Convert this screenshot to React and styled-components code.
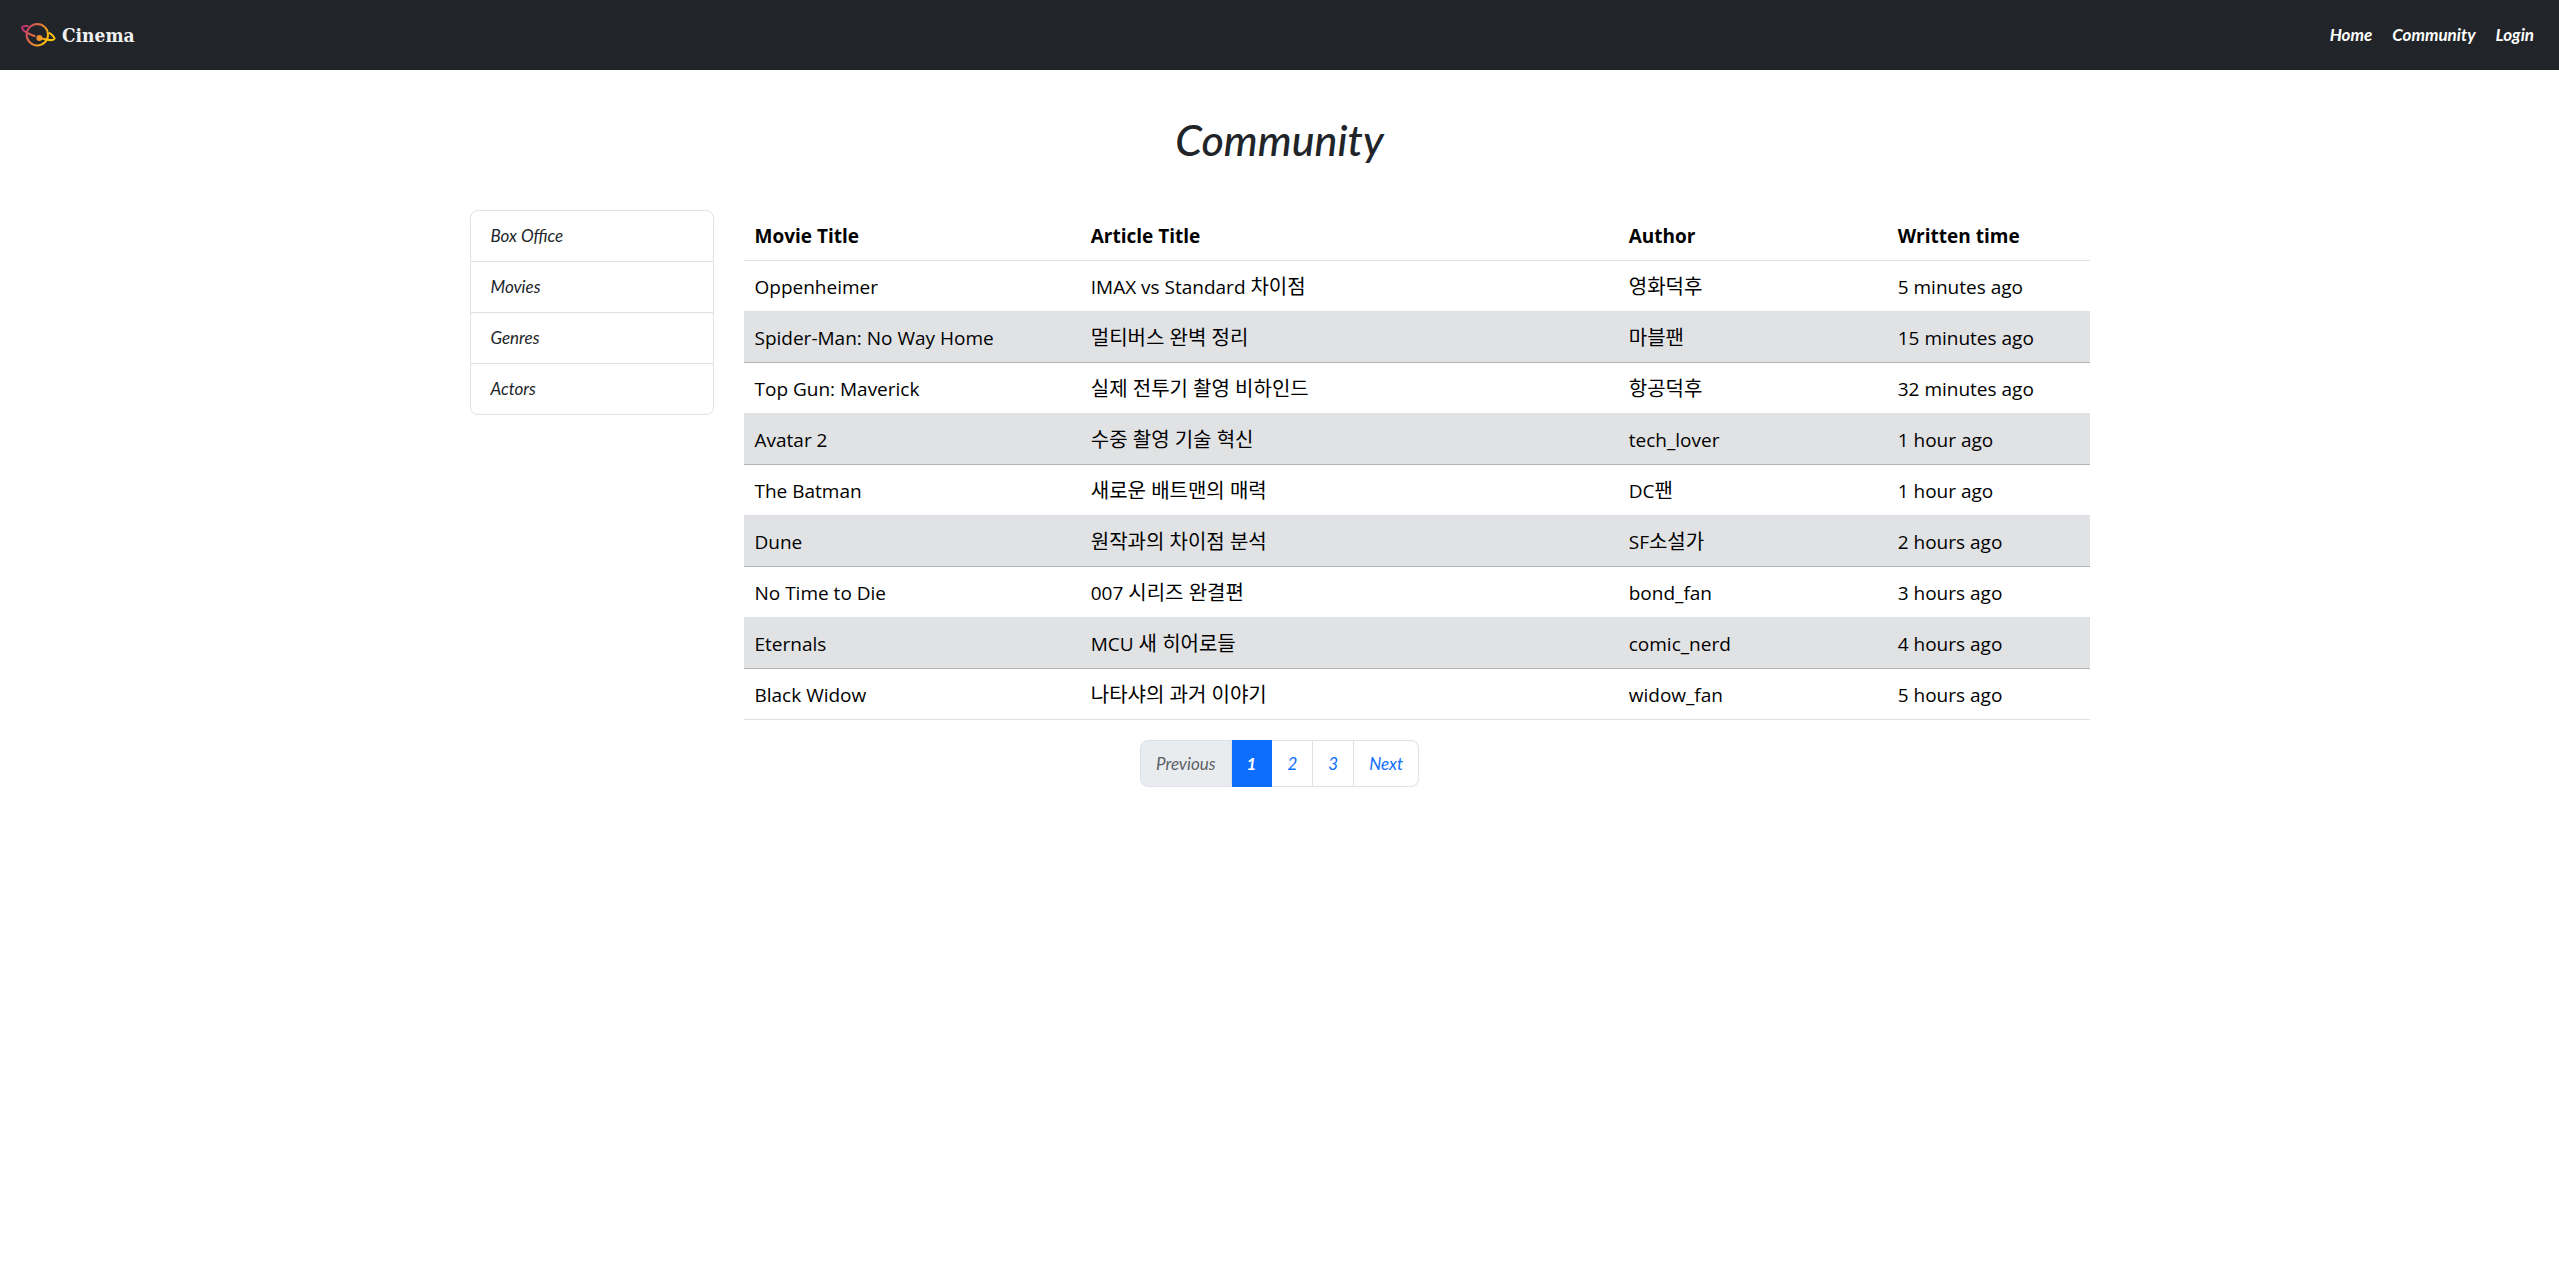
import React from 'react';
import styled, { createGlobalStyle } from 'styled-components';

const script = "'Lato', sans-serif";
const body = "'Open Sans', 'Noto Sans CJK KR', sans-serif";

const GlobalStyle = createGlobalStyle`
  *, *::before, *::after { box-sizing: border-box; }
  body {
    margin: 0;
    background: #fff;
    color: #212529;
    font: 400 19px/30px ${body};
  }
  a { color: inherit; text-decoration: none; }
  ul { list-style: none; margin: 0; padding: 0; }
`;

const Header = styled.header`
  display: flex;
  align-items: center;
  justify-content: space-between;
  height: 70px;
  padding: 0 15px;
  background: #212529;
  color: #fff;
`;

const Brand = styled.a`
  display: flex;
  align-items: center;
  gap: 6px;
  padding: 0 5px;
  color: #f1f1f2;
  font: 700 19px/30px 'DejaVu Serif Condensed', 'DejaVu Serif', serif;
`;

const NavList = styled.ul`
  display: flex;
`;

const NavLink = styled.a`
  display: block;
  padding: 10px;
  font: italic 700 17px/30px ${script};
`;

const Main = styled.main`
  max-width: 1650px;
  margin: 0 auto;
  padding: 40px 15px;
`;

const Title = styled.h1`
  margin: 0 0 40px;
  font: italic 500 43px/60px ${script};
  text-align: center;
`;

const Columns = styled.div`
  display: grid;
  grid-template-columns: calc((100% + 30px) / 6 - 30px) 1fr;
  gap: 30px;
  align-items: start;
`;

const SideList = styled.ul`
  border: 1px solid #dee2e6;
  border-radius: 8px;
  font: italic 400 17px/30px ${script};

  li + li { border-top: 1px solid #dee2e6; }
`;

const SideLink = styled.a`
  display: block;
  padding: 10px 20px;
`;

const Table = styled.table`
  width: 100%;
  margin-bottom: 20px;
  border-spacing: 0;
  table-layout: fixed;
  color: #000;
  text-align: left;
`;

const Col = styled.col`
  width: ${(p) => p.$share}%;
`;

const HeadCell = styled.th`
  height: 51px;
  padding: 2px 10px 0;
  border-bottom: 1px solid #dee2e6;
  font-weight: 700;
`;

const Row = styled.tr`
  background: ${(p) => (p.$striped ? '#e1e2e4' : '#fff')};
  --line: ${(p) => (p.$striped ? '#b1b4b6' : '#dee2e6')};
`;

const Cell = styled.td`
  height: 51px;
  padding: 2px 10px 0;
  border-bottom: 1px solid var(--line);
`;

const Hangul = styled.span`
  font-size: 20px;
`;

const Pages = styled.ul`
  display: flex;
  justify-content: center;
  font: italic 400 17px/30px ${script};
`;

const PageItem = styled.li`
  &:first-child > * { border-left-width: 1px; border-radius: 8px 0 0 8px; }
  &:last-child > * { border-radius: 0 8px 8px 0; }
`;

const PageLink = styled.a`
  display: flex;
  align-items: center;
  height: 47px;
  padding: 0 15px;
  border: 1px solid ${(p) => (p.$active ? '#0d6efd' : '#dee2e6')};
  border-left-width: 0;
  background: ${(p) => (p.$active ? '#0d6efd' : p.$disabled ? '#e9ecef' : '#fff')};
  color: ${(p) => (p.$active ? '#fff' : p.$disabled ? '#5c6166' : '#0d6efd')};
  font-weight: ${(p) => (p.$active ? 700 : 400)};
`;

const articles = [
  ['Oppenheimer', 'IMAX vs Standard 차이점', '영화덕후', '5 minutes ago'],
  ['Spider-Man: No Way Home', '멀티버스 완벽 정리', '마블팬', '15 minutes ago'],
  ['Top Gun: Maverick', '실제 전투기 촬영 비하인드', '항공덕후', '32 minutes ago'],
  ['Avatar 2', '수중 촬영 기술 혁신', 'tech_lover', '1 hour ago'],
  ['The Batman', '새로운 배트맨의 매력', 'DC팬', '1 hour ago'],
  ['Dune', '원작과의 차이점 분석', 'SF소설가', '2 hours ago'],
  ['No Time to Die', '007 시리즈 완결편', 'bond_fan', '3 hours ago'],
  ['Eternals', 'MCU 새 히어로들', 'comic_nerd', '4 hours ago'],
  ['Black Widow', '나타샤의 과거 이야기', 'widow_fan', '5 hours ago'],
];

// Korean runs are set one size up from the Latin text beside them.
const Mixed = ({ text }) =>
  text
    .split(/([가-힣][가-힣 ]*)/)
    .filter(Boolean)
    .map((run, i) => (/^[가-힣]/.test(run) ? <Hangul key={i}>{run}</Hangul> : run));

const Planet = () => (
  <svg width="36" height="26" viewBox="0 0 36 26" fill="none" aria-hidden="true">
    <defs>
      <linearGradient id="flare" x1="1" y1="3" x2="33" y2="20" gradientUnits="userSpaceOnUse">
        <stop offset="0" stopColor="#b8277f" />
        <stop offset="0.5" stopColor="#e67a3c" />
        <stop offset="0.85" stopColor="#fcc30b" />
      </linearGradient>
    </defs>
    <g stroke="url(#flare)" strokeWidth="2" strokeLinecap="round">
      <circle cx="17.3" cy="12.7" r="10.7" />
      <path d="M7.5 4C4.5 3.7 2 4.2 2 5.7C2 8.5 9 12 14.5 14" />
      <path d="M29.5 11C33 13.5 35 16 34.3 17C33.2 18.7 27 18 22 16.5" />
    </g>
    <circle cx="19.3" cy="16" r="3" fill="url(#flare)" />
  </svg>
);

export default function App() {
  return (
    <>
      <GlobalStyle />
      <Header>
        <Brand href="#"><Planet />Cinema</Brand>
        <nav>
          <NavList>
            {['Home', 'Community', 'Login'].map((t) => (
              <li key={t}><NavLink href="#">{t}</NavLink></li>
            ))}
          </NavList>
        </nav>
      </Header>
      <Main>
        <Title>Community</Title>
        <Columns>
          <SideList>
            {['Box Office', 'Movies', 'Genres', 'Actors'].map((t) => (
              <li key={t}><SideLink href="#">{t}</SideLink></li>
            ))}
          </SideList>
          <Table>
            <colgroup>
              {[25, 40, 20, 15].map((w) => <Col key={w} $share={w} />)}
            </colgroup>
            <thead>
              <tr>
                {['Movie Title', 'Article Title', 'Author', 'Written time'].map((t) => (
                  <HeadCell key={t} scope="col">{t}</HeadCell>
                ))}
              </tr>
            </thead>
            <tbody>
              {articles.map((cells, i) => (
                <Row key={cells[0]} $striped={i % 2 === 1}>
                  {cells.map((c) => <Cell key={c}><Mixed text={c} /></Cell>)}
                </Row>
              ))}
            </tbody>
          </Table>
        </Columns>
        <nav aria-label="Pages">
          <Pages>
            <PageItem><PageLink as="span" $disabled>Previous</PageLink></PageItem>
            <PageItem><PageLink href="#" $active aria-current="page">1</PageLink></PageItem>
            <PageItem><PageLink href="#">2</PageLink></PageItem>
            <PageItem><PageLink href="#">3</PageLink></PageItem>
            <PageItem><PageLink href="#">Next</PageLink></PageItem>
          </Pages>
        </nav>
      </Main>
    </>
  );
}
